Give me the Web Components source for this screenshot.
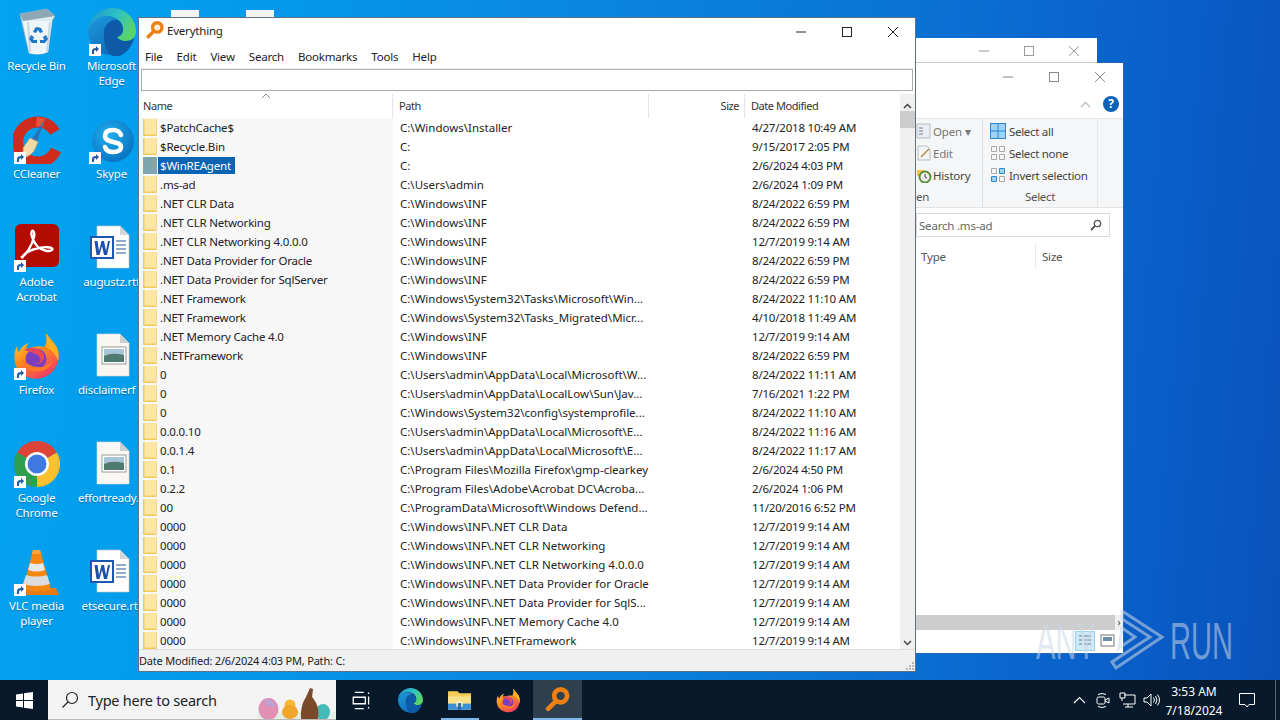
<!DOCTYPE html>
<html>
<head>
<meta charset="utf-8">
<title>Everything</title>
<style>
  html, body { margin: 0; height: 100%; overflow: hidden; }
  body { font-family: "Noto Sans", sans-serif; font-size: 11.5px; }
</style>
</head>
<body>
<win-desktop>
  <desk-icons slot="icons">
    <desk-icon icon="bin" label="Recycle Bin"></desk-icon>
    <desk-icon icon="edge" label="Microsoft Edge" link></desk-icon>
    <desk-icon icon="ccleaner" label="CCleaner" link></desk-icon>
    <desk-icon icon="skype" label="Skype" link></desk-icon>
    <desk-icon icon="acrobat" label="Adobe Acrobat" link></desk-icon>
    <desk-icon icon="word" label="augustz.rtf"></desk-icon>
    <desk-icon icon="firefox" label="Firefox" link></desk-icon>
    <desk-icon icon="image" label="disclaimerf" cut></desk-icon>
    <desk-icon icon="chrome" label="Google Chrome" link></desk-icon>
    <desk-icon icon="image" label="effortready." cut></desk-icon>
    <desk-icon icon="vlc" label="VLC media player" link></desk-icon>
    <desk-icon icon="word" label="etsecure.rtf"></desk-icon>
  </desk-icons>
  <explorer-window slot="windows" class="back"></explorer-window>
  <explorer-window slot="windows" class="front" ribbon></explorer-window>
  <everything-window slot="windows"></everything-window>
  <any-run slot="windows"></any-run>
  <task-bar slot="bar"></task-bar>
</win-desktop>

<script>
// icons are all on a 48x48 box
const ICONS = {
  bin: `<svg viewBox="0 0 48 48"><path d="M7 6 34 1l8 7-3 5-4 31q-9 4-19 1Z" fill="#dceaf2" stroke="#9fb6c4" stroke-width=".7"/><path d="M7 6 34 1l8 7-32 5Z" fill="#8fa6b4"/><path d="M10 13l29 0-4 31q-9 4-19 1Z" fill="#eef5f9"/><path d="M15 14l2 30M37 14l-3 30" stroke="#c6d7e1" stroke-width="2"/><path d="M24 19l4 1 2 4-3 1-2-3-2 3-3-1 2-4Z" fill="#1f78c8"/><path d="M18 27l3 2-1 3h4v3h-5l-3-4ZM33 27l2 4-3 4h-5v-3h4l-1-3Z" fill="#1f78c8"/></svg>`,
  edge: `<svg viewBox="0 0 48 48"><defs><linearGradient id="e1" x1="0" y1="0" x2="1" y2=".5"><stop offset="0" stop-color="#1c8fd0"/><stop offset=".55" stop-color="#2fc0c4"/><stop offset="1" stop-color="#58d46a"/></linearGradient><linearGradient id="e2" x1="0" y1="0" x2=".6" y2="1"><stop offset="0" stop-color="#1e9be0"/><stop offset="1" stop-color="#0f6cb8"/></linearGradient></defs><path d="M24 0C37 0 48 10 48 23c0 6-4 10-10 10-5 0-8-2-9-4 4-1 6-4 6-8C35 13 27 8 20 8 10 8 3 14 0 22 1 10 11 0 24 0Z" fill="url(#e1)"/><path d="M0 22C3 14 10 8 20 8c4 0 8 2 10 4-6-1-13 3-14 11-1 10 7 20 18 21-3 2-7 3-11 3C10 47 0 36 0 22Z" fill="url(#e2)"/><path d="M16 23c1-8 8-12 14-11 3 2 5 5 5 9 0 4-2 7-6 8 1 2 4 4 9 4 3 0 6-1 8-3-2 9-8 16-17 19C18 49 15 33 16 23Z" fill="#0e5aa7"/></svg>`,
  ccleaner: `<svg viewBox="0 0 48 48"><path d="M42 16 A20 20 0 1 0 43 34" fill="none" stroke="#cf2c1e" stroke-width="11"/><path d="M24 1l8 2-2 8-7-1Z" fill="#e8543a"/><path d="M32 3 24 25l-5-2Z" fill="#2f6fb5"/><path d="M17 22l8 4-4 9q-6 8-17 7 8-6 6-10Z" fill="#f1dba8" stroke="#c9a868" stroke-width=".7"/></svg>`,
  skype: `<svg viewBox="0 0 48 48"><defs><radialGradient id="s1" cx=".4" cy=".35" r=".8"><stop offset="0" stop-color="#1fb0f0"/><stop offset="1" stop-color="#0668b8"/></radialGradient></defs><circle cx="25" cy="25" r="21" fill="url(#s1)"/><path d="M33 19c-1-3-4-5-8-5-5 0-8 2-8 6 0 8 16 4 16 11 0 4-4 5-8 5-4 0-7-2-8-5" fill="none" stroke="#fff" stroke-width="4.6" stroke-linecap="round"/></svg>`,
  acrobat: `<svg viewBox="0 0 48 48"><rect x="2" y="0" width="44" height="43" rx="6" fill="#b30b00"/><path d="M9 33c5-3 10-12 12-20 1-5-1-7-2-6-2 2 1 11 6 16 4 4 12 5 14 3 2-2-4-4-13-2-7 1-14 5-16 8-1 2 0 2-1 1Z" fill="none" stroke="#fff" stroke-width="2.4"/></svg>`,
  word: `<svg viewBox="0 0 48 48"><path d="M9 2h23l9 9v33H9Z" fill="#fff" stroke="#c8c8c8" stroke-width=".6"/><path d="M32 2v9h9Z" fill="#d6d6d6"/><path d="M28 17h10M28 21h10M28 25h10M28 29h10" stroke="#2a5699" stroke-width="1.2"/><rect x="3" y="13" width="22" height="21" fill="#fff" stroke="#1b56b0" stroke-width="2"/><path d="M6.500 17h3l1.500 10 2.500-10h2.500l2 10 2-10h2l-3 14h-3l-2-9-2.500 9h-3Z" fill="#1d50a8"/></svg>`,
  image: `<svg viewBox="0 0 48 48"><path d="M9 2h23l9 9v33H9Z" fill="#f8f7f3" stroke="#dcdcdc" stroke-width=".6"/><path d="M32 2v9h9Z" fill="#cfcfcf"/><rect x="14" y="15" width="24" height="17" fill="#fff" stroke="#9a9a9a"/><rect x="16" y="17" width="20" height="7" fill="#a8c6d8"/><path d="M16 24q8-4 20-1v7H16Z" fill="#4e7a70"/></svg>`,
  firefox: `<svg viewBox="0 0 48 48"><defs><linearGradient id="f1" x1=".2" y1="0" x2=".8" y2="1"><stop offset="0" stop-color="#ffcf30"/><stop offset=".45" stop-color="#ff8a1f"/><stop offset="1" stop-color="#f0326a"/></linearGradient></defs><path d="M33 1c3 5 6 7 10 13 5 8 3 21-6 28-9 7-22 6-30-2C0 33 0 22 4 14c0 3 1 5 2 6 2-5 6-8 10-9-3 3-3 5-2 6 5-2 12-4 17-2 3-4 3-9 2-14Z" fill="url(#f1)"/><path d="M33 1c3 5 6 7 10 13 3 5 3 11 2 15-2-6-6-11-12-14 1-4 1-9 0-14Z" fill="#ffb01f"/><circle cx="23" cy="27" r="10.500" fill="#7a3fc0"/><path d="M11 18c6-4 17-3 20 5 1 6-4 10-9 9 4 0 6-3 5-6-1-4-7-5-16-8Z" fill="#e8475f"/><path d="M9 26c1 10 10 15 19 13 7-1 11-7 12-12-3 6-10 9-16 8-7-1-12-4-15-9Z" fill="#ff7a28"/></svg>`,
  chrome: `<svg viewBox="0 0 48 48"><path d="M24 24 4.100 12.500A23 23 0 0 1 43.900 12.500Z" fill="#db4437"/><path d="M24 24 43.900 12.500A23 23 0 0 1 24 47Z" fill="#fbc02d"/><path d="M24 24 24 47A23 23 0 0 1 4.100 12.500Z" fill="#2f9e4f"/><circle cx="24" cy="24" r="12" fill="#fff"/><circle cx="24" cy="24" r="9.500" fill="#3f78e0"/></svg>`,
  vlc: `<svg viewBox="0 0 48 48"><path d="M5 40h38l3 7H2Z" fill="#e77b12"/><path d="M20 2h7l11 39q-14 5-28 0Z" fill="#f5860f"/><path d="M17 15q7 2 13 0l2 7q-8 3-17 0Z" fill="#e8e8e8"/><path d="M13 27q10 3 21 0l3 9q-13 4-27 0Z" fill="#dcdcdc"/><path d="M20 2h7l1 4h-9Z" fill="#ffa53a"/></svg>`,
  search: `<svg viewBox="0 0 48 48"><circle cx="30" cy="17" r="12.500" fill="#fff3dc" stroke="#ee7f12" stroke-width="9"/><path d="M20 28 6 42" stroke="#ee7f12" stroke-width="9" stroke-linecap="round"/></svg>`,
  folder: `<svg viewBox="0 0 14 17"><path d="M0 0h14v17H0Z" fill="#fbe7a3"/><path d="M0 0h1.500v17H0ZM0 15.500h14V17H0Z" fill="#f0c95c"/><path d="M13 0h1v17h-1Z" fill="#f4d888"/></svg>`,
  explorer: `<svg viewBox="0 0 24 24"><path d="M1 3h9l2 2h11v16H1Z" fill="#f6cf5a"/><path d="M1 8h22v13H1Z" fill="#fbe08a"/><path d="M1 15h22v6H1Z" fill="#3d8fd6"/><rect x="9" y="13" width="6" height="5" fill="#fff3c8"/><rect x="10.500" y="14.500" width="3" height="6.500" fill="#2a6fb0"/></svg>`
};

const SHORTCUT = `<svg viewBox="0 0 12 12"><rect width="12" height="12" fill="#fff"/><path d="M3 10V7q0-3 4-3V2l3 3-3 3V6q-2 0-2 2v2Z" fill="#1c5ea8"/></svg>`;

class WinDesktop extends HTMLElement {
  constructor() {
    super();
    this.attachShadow({ mode: 'open' }).innerHTML = `
      <style>
        :host { display: flex; flex-direction: column; width: 1280px; height: 720px; overflow: hidden;
          font-family: "Noto Sans", sans-serif; font-size: 11.500px; letter-spacing: -.2px; color: #222; }
        .wall { position: relative; flex: 1; overflow: hidden;
          background: linear-gradient(95deg, #03a3ef 0%, #039ded 14%, #0a86de 45%, #0a6fd2 72%, #0a5cc6 90%, #0a52ba 100%); }
        .paper { position: absolute; top: 10px; width: 28px; height: 10px; background: #f4f4f4; }
      </style>
      <div class="wall">
        <slot name="icons"></slot>
        <div class="paper" style="left:171px"></div>
        <div class="paper" style="left:246px"></div>
        <slot name="windows"></slot>
      </div>
      <slot name="bar"></slot>`;
  }
}

class DeskIcons extends HTMLElement {
  constructor() {
    super();
    this.attachShadow({ mode: 'open' }).innerHTML = `
      <style>
        :host { position: absolute; left: -1px; top: 8px; display: grid;
          grid-template-columns: 75px 75px; grid-auto-rows: 108px; }
      </style>
      <slot></slot>`;
  }
}

class DeskIcon extends HTMLElement {
  constructor() {
    super();
    this.attachShadow({ mode: 'open' });
  }
  connectedCallback() {
    const link = this.hasAttribute('link') ? `<span class="arrow">${SHORTCUT}</span>` : '';
    this.shadowRoot.innerHTML = `
      <style>
        :host { display: flex; flex-direction: column; align-items: center; }
        .pic { position: relative; width: 48px; height: 48px; margin-bottom: 2px; }
        .pic svg { display: block; width: 48px; height: 48px; }
        .arrow { position: absolute; left: 1px; bottom: 0; width: 12px; height: 12px; }
        .arrow svg { width: 12px; height: 12px; }
        .label { width: 75px; box-sizing: border-box; text-align: center; color: #fff; line-height: 15px;
          text-shadow: 0 1px 1px rgba(0,40,90,.45); }
        :host([cut]) .label { text-align: left; padding-left: 4px; white-space: nowrap; }
      </style>
      <div class="pic">${ICONS[this.getAttribute('icon')]}${link}</div>
      <div class="label">${this.getAttribute('label')}</div>`;
  }
}

const WIN_BUTTONS = `
  <svg viewBox="0 0 10 10" width="10" height="10"><path d="M0 5h10" stroke="currentColor"/></svg>
  <svg viewBox="0 0 10 10" width="10" height="10"><rect x=".5" y=".5" width="9" height="9" fill="none" stroke="currentColor"/></svg>
  <svg viewBox="0 0 10 10" width="10" height="10"><path d="M0 0l10 10M10 0 0 10" stroke="currentColor"/></svg>`;

class ExplorerWindow extends HTMLElement {
  constructor() {
    super();
    this.attachShadow({ mode: 'open' });
  }
  connectedCallback() {
    const ribbon = this.hasAttribute('ribbon');
    const back = `
      <style>
        :host { position: absolute; left: 900px; top: 38px; width: 197px; height: 60px; background: #fff;
          color: #9a9a9a; }
        .btns { display: flex; justify-content: flex-end; align-items: center; gap: 35px; height: 25px; padding-right: 18px; }
      </style>
      <div class="btns">${WIN_BUTTONS}</div>`;
    const front = `
      <style>
        :host { position: absolute; left: 900px; top: 63px; width: 223px; height: 590px; background: #fff;
          color: #333; display: flex; flex-direction: column; box-shadow: 0 0 0 1px rgba(90,110,130,.35); }
        .btns { display: flex; justify-content: flex-end; align-items: center; gap: 36px; height: 27px; padding-right: 18px; color: #8a8a8a; }
        .tabs { display: flex; justify-content: flex-end; align-items: center; gap: 12px; height: 28px; padding-right: 4px; color: #bbb; }
        .help { width: 16px; height: 16px; border-radius: 50%; background: #0b63b5; color: #fff; font-weight: 700;
          font-size: 12px; line-height: 16px; text-align: center; }
        .ribbon { background: #f5f6f7; border-top: 1px solid #e6e6e6; border-bottom: 1px solid #e4e4e4; height: 90px; box-sizing: border-box;
          display: grid; grid-template-columns: 66px 1fr; padding-left: 16px; }
        .grp { display: flex; flex-direction: column; align-items: stretch; }
        .grp.sel { border-left: 1px solid #dcdfe2; border-right: 1px solid #e4e6e8; margin-right: 25px; padding-left: 7px; letter-spacing: -.3px; }
        .item { display: flex; align-items: center; gap: 1px; height: 22px; white-space: nowrap; }
        .sel .item { gap: 3px; }
        .items { padding-top: 1px; height: 70px; }
        .item span { color: #444; }
        .dim span { color: #777; }
        .cap { text-align: center; color: #555; line-height: 14px; }
        .sel .cap { margin-left: -7px; }
        .item svg { display: block; flex: none; }
        .find { margin: 5px 13px 0 16px; height: 22px; border: 1px solid #d9d9d9; display: flex; align-items: center;
          justify-content: space-between; padding: 0 7px 0 2px; color: #666; }
        .heads { display: flex; height: 24px; margin: 7px 0 0 21px; color: #555; align-items: center; }
        .heads span { height: 100%; display: flex; align-items: center; border-right: 1px solid #e8e8e8; padding-left: 0; }
        .body { flex: 1; }
        .hbar { height: 15px; margin-left: 16px; background: #cdcdcd; display: flex; justify-content: flex-end; }
        .hbar i { background: #f0f0f0; width: 8px; font-style: normal; text-align: center; line-height: 14px; color: #444; font-size: 10px; margin-left: auto; }
        .foot { height: 23px; box-sizing: border-box; display: flex; justify-content: flex-end; align-items: flex-start; gap: 5px; padding: 1px 8px 0 0; }
        .foot b { display: block; width: 20px; height: 20px; box-sizing: border-box; }
        .foot b:last-child { width: 15px; }
        .foot .on { background: #cde8f8; border: 1px solid #99d1ef; }
      </style>
      <div class="btns">${WIN_BUTTONS}</div>
      <div class="tabs">
        <svg width="11" height="7" viewBox="0 0 11 7"><path d="M1 6l4.500-4.500L10 6" fill="none" stroke="currentColor" stroke-width="1.300"/></svg>
        <div class="help">?</div>
      </div>
      <div class="ribbon">
        <div class="grp">
          <div class="items">
            <div class="item dim"><svg width="16" height="16" viewBox="0 0 16 16"><path d="M1 1h13v14H1Z" fill="#eaeef2" stroke="#b5bcc4"/><path d="M3 5h4M3 8h4M3 11h4" stroke="#9aa4ae" stroke-width="1.500"/></svg><span>Open ▾</span></div>
            <div class="item dim"><svg width="16" height="16" viewBox="0 0 16 16"><path d="M2 1h9l3 3v11H2Z" fill="#f4f6f8" stroke="#b5bcc4"/><path d="M5 12l8-8" stroke="#b58a3c" stroke-width="1.500"/></svg><span>Edit</span></div>
            <div class="item"><svg width="16" height="16" viewBox="0 0 16 16"><path d="M1 3h7v6H1Z" fill="#f3c34c"/><circle cx="9" cy="10" r="5.500" fill="#eef1ee" stroke="#5b8f3a" stroke-width="2"/><path d="M9 7v3l2 1" stroke="#444" fill="none"/></svg><span>History</span></div>
          </div>
          <div class="cap" style="text-align:left">en</div>
        </div>
        <div class="grp sel">
          <div class="items">
            <div class="item"><svg width="16" height="16" viewBox="0 0 16 16"><rect x=".5" y=".5" width="15" height="15" fill="#9fd3f5" stroke="#2f86c9"/><path d="M8 0v16M0 8h16" stroke="#2f86c9"/></svg><span>Select all</span></div>
            <div class="item"><svg width="16" height="16" viewBox="0 0 16 16"><path d="M1.500 1.500h5v5h-5ZM9.500 1.500h5v5h-5ZM1.500 9.500h5v5h-5ZM9.500 9.500h5v5h-5Z" fill="none" stroke="#a9a9a9"/></svg><span>Select none</span></div>
            <div class="item"><svg width="16" height="16" viewBox="0 0 16 16"><path d="M1.500 1.500h5v5h-5ZM9.500 9.500h5v5h-5Z" fill="none" stroke="#a9a9a9"/><path d="M9.500 1.500h5v5h-5ZM1.500 9.500h5v5h-5Z" fill="#9fd3f5" stroke="#2f86c9"/></svg><span>Invert selection</span></div>
          </div>
          <div class="cap">Select</div>
        </div>
      </div>
      <div class="find"><span>Search .ms-ad</span>
        <svg width="12" height="12" viewBox="0 0 12 12"><circle cx="7.500" cy="4.500" r="3.200" fill="none" stroke="#555" stroke-width="1.300"/><path d="M5 7 1 11" stroke="#555" stroke-width="1.800"/></svg></div>
      <div class="heads"><span style="width:114px">Type</span><span style="width:80px;padding-left:6px;border-right:0">Size</span></div>
      <div class="body"></div>
      <div class="hbar"><i>›</i></div>
      <div class="foot">
        <b class="on"><svg width="18" height="18" viewBox="0 0 18 18"><path d="M3 4h3M3 8h3M3 12h3M8 4h7M8 8h7M8 12h7" stroke="#777" stroke-width="1.200"/></svg></b>
        <b><svg width="15" height="20" viewBox="0 0 15 20"><rect x="1" y="4" width="13" height="11" fill="#fff" stroke="#777"/><rect x="3" y="6" width="9" height="4" fill="#6c8ea8"/></svg></b>
      </div>`;
    this.shadowRoot.innerHTML = ribbon ? front : back;
  }
}

class EverythingWindow extends HTMLElement {
  constructor() {
    super();
    const rows = [
      ['$PatchCache$', 'C:\\Windows\\Installer', '4/27/2018 10:49 AM'],
      ['$Recycle.Bin', 'C:', '9/15/2017 2:05 PM'],
      ['$WinREAgent', 'C:', '2/6/2024 4:03 PM', 1],
      ['.ms-ad', 'C:\\Users\\admin', '2/6/2024 1:09 PM'],
      ['.NET CLR Data', 'C:\\Windows\\INF', '8/24/2022 6:59 PM'],
      ['.NET CLR Networking', 'C:\\Windows\\INF', '8/24/2022 6:59 PM'],
      ['.NET CLR Networking 4.0.0.0', 'C:\\Windows\\INF', '12/7/2019 9:14 AM'],
      ['.NET Data Provider for Oracle', 'C:\\Windows\\INF', '8/24/2022 6:59 PM'],
      ['.NET Data Provider for SqlServer', 'C:\\Windows\\INF', '8/24/2022 6:59 PM'],
      ['.NET Framework', 'C:\\Windows\\System32\\Tasks\\Microsoft\\Win...', '8/24/2022 11:10 AM'],
      ['.NET Framework', 'C:\\Windows\\System32\\Tasks_Migrated\\Micr...', '4/10/2018 11:49 AM'],
      ['.NET Memory Cache 4.0', 'C:\\Windows\\INF', '12/7/2019 9:14 AM'],
      ['.NETFramework', 'C:\\Windows\\INF', '8/24/2022 6:59 PM'],
      ['0', 'C:\\Users\\admin\\AppData\\Local\\Microsoft\\W...', '8/24/2022 11:11 AM'],
      ['0', 'C:\\Users\\admin\\AppData\\LocalLow\\Sun\\Jav...', '7/16/2021 1:22 PM'],
      ['0', 'C:\\Windows\\System32\\config\\systemprofile...', '8/24/2022 11:10 AM'],
      ['0.0.0.10', 'C:\\Users\\admin\\AppData\\Local\\Microsoft\\E...', '8/24/2022 11:16 AM'],
      ['0.0.1.4', 'C:\\Users\\admin\\AppData\\Local\\Microsoft\\E...', '8/24/2022 11:17 AM'],
      ['0.1', 'C:\\Program Files\\Mozilla Firefox\\gmp-clearkey', '2/6/2024 4:50 PM'],
      ['0.2.2', 'C:\\Program Files\\Adobe\\Acrobat DC\\Acroba...', '2/6/2024 1:06 PM'],
      ['00', 'C:\\ProgramData\\Microsoft\\Windows Defend...', '11/20/2016 6:52 PM'],
      ['0000', 'C:\\Windows\\INF\\.NET CLR Data', '12/7/2019 9:14 AM'],
      ['0000', 'C:\\Windows\\INF\\.NET CLR Networking', '12/7/2019 9:14 AM'],
      ['0000', 'C:\\Windows\\INF\\.NET CLR Networking 4.0.0.0', '12/7/2019 9:14 AM'],
      ['0000', 'C:\\Windows\\INF\\.NET Data Provider for Oracle', '12/7/2019 9:14 AM'],
      ['0000', 'C:\\Windows\\INF\\.NET Data Provider for SqlS...', '12/7/2019 9:14 AM'],
      ['0000', 'C:\\Windows\\INF\\.NET Memory Cache 4.0', '12/7/2019 9:14 AM'],
      ['0000', 'C:\\Windows\\INF\\.NETFramework', '12/7/2019 9:14 AM']
    ];
    this.attachShadow({ mode: 'open' }).innerHTML = `
      <style>
        :host { position: absolute; left: 138px; top: 17px; width: 778px; height: 655px; box-sizing: border-box;
          background: #fff; border: 1px solid #5f7183; display: flex; flex-direction: column; color: #222; }
        .title { flex: none; height: 28px; box-sizing: border-box; padding: 0 0 4px 7px; display: flex; align-items: center; gap: 3px; }
        .title svg.logo { width: 18px; height: 18px; }
        .title span { flex: 1; }
        .btns { display: flex; align-items: center; gap: 36px; padding: 4px 17px 0 0; color: #222; }
        .menu { flex: none; height: 23px; box-sizing: border-box; display: flex; align-items: center; gap: 14px; padding: 0 0 2px 6px; border-bottom: 1px solid #f0f0f0; }
        .input { flex: none; height: 20px; margin: 0 2px; border: 1px solid #adadad; background: #fff; }
        .head { flex: none; position: relative; height: 24px; box-sizing: border-box; margin-top: 3px; display: grid; grid-template-columns: 254px 256px 96px 1fr 15px; font-size: 11px; letter-spacing: -.45px; }
        .head > div { display: flex; align-items: center; border-right: 1px solid #e5e5e5; padding: 0 0 2px 4px; color: #333; }
        .head .size { justify-content: flex-end; padding: 0 5px 2px 0; }
        .head .date { padding-left: 6px; border: 0; }
        .head .up { background: #f0f0f0; border: 0; padding: 0; justify-content: center; }
        .caret { position: absolute; left: 122px; top: -1px; }
        .main { flex: 1; min-height: 0; display: grid; grid-template-columns: 1fr 15px; }
        .list { overflow: hidden; }
        .bar { background: #f0f0f0; position: relative; display: flex; justify-content: center; }
        .thumb { position: absolute; left: 0; right: 0; top: -7px; height: 17px; background: #cdcdcd; }
        .down { position: absolute; bottom: 3px; left: 3px; }
        .status { flex: none; height: 21px; background: #f0f0f0; border-top: 1px solid #dedede; display: flex; align-items: center; justify-content: space-between; font-size: 11px; }
        .status svg { align-self: flex-end; }
      </style>
      <div class="title">
        <svg class="logo" viewBox="0 0 48 48">${ICONS.search.replace(/<\/?svg[^>]*>/g, '')}</svg>
        <span>Everything</span>
        <div class="btns">${WIN_BUTTONS}</div>
      </div>
      <div class="menu"><span>File</span><span>Edit</span><span>View</span><span>Search</span><span>Bookmarks</span><span>Tools</span><span>Help</span></div>
      <div class="input"></div>
      <div class="head">
        <div>Name</div><div style="padding-left:6px">Path</div><div class="size">Size</div><div class="date">Date Modified</div>
        <div class="up"><svg width="9" height="6" viewBox="0 0 9 6"><path d="M1 5l3.500-3.500L8 5" fill="none" stroke="#444" stroke-width="1.500"/></svg></div>
        <svg class="caret" width="10" height="6" viewBox="0 0 10 6"><path d="M1 5l4-4 4 4" fill="none" stroke="#888"/></svg>
      </div>
      <div class="main">
        <div class="list">${rows.map(r => `<file-row name="${r[0]}" path="${r[1].replace(/\\/g, '&#92;')}" date="${r[2]}"${r[3] ? ' selected' : ''}></file-row>`).join('')}</div>
        <div class="bar"><div class="thumb"></div>
          <svg class="down" width="9" height="6" viewBox="0 0 9 6"><path d="M1 1l3.500 3.500L8 1" fill="none" stroke="#444" stroke-width="1.500"/></svg></div>
      </div>
      <div class="status"><span>Date Modified: 2/6/2024 4:03 PM, Path: C:</span>
        <svg width="12" height="12" viewBox="0 0 12 12"><path d="M9 3h2v2H9ZM6 6h2v2H6ZM9 6h2v2H9ZM3 9h2v2H3ZM6 9h2v2H6ZM9 9h2v2H9Z" fill="#b8b8b8"/></svg></div>`;
  }
}

class FileRow extends HTMLElement {
  constructor() {
    super();
    this.attachShadow({ mode: 'open' });
  }
  connectedCallback() {
    this.shadowRoot.innerHTML = `
      <style>
        :host { display: grid; grid-template-columns: 254px 256px 96px 1fr; height: 19px; line-height: 19px; white-space: nowrap; color: #222; }
        .name { background: #f7f7f7; display: flex; align-items: center; padding-left: 4px; }
        .name svg { width: 14px; height: 17px; margin-right: 1px; flex: none; }
        :host([selected]) .name svg path { fill: #7fa6b0; }
        :host([selected]) .text { background: #0a64b4; color: #fff; }
        .text { padding: 0 4px 0 2px; line-height: 17px; }
        .path { padding-left: 7px; letter-spacing: 0; }
        .date { padding-left: 7px; }
      </style>
      <div class="name">${ICONS.folder}<span class="text">${this.getAttribute('name')}</span></div>
      <div class="path">${this.getAttribute('path')}</div>
      <div></div>
      <div class="date">${this.getAttribute('date')}</div>`;
  }
}

class AnyRun extends HTMLElement {
  constructor() {
    super();
    this.attachShadow({ mode: 'open' }).innerHTML = `
      <style>
        :host { position: absolute; left: 1036px; top: 608px; width: 200px; height: 66px; display: flex; align-items: center;
          color: rgba(205,216,230,.55); font-family: "Liberation Sans", sans-serif; font-size: 52px; letter-spacing: 0; line-height: 66px; pointer-events: none; }
        span { display: block; transform: scaleX(.56); transform-origin: 0 50%; width: 60px; }
        .run { margin-left: 74px; }
        svg { position: absolute; left: 72px; top: -2px; }
      </style>
      <span>ANY</span>
      <svg width="62" height="66" viewBox="0 0 62 66"><path d="M14 5 54 31 8 62l-4-6 38-25L14 13ZM14 22l13 9-16 11Z" fill="none" stroke="rgba(205,216,230,.55)" stroke-width="3"/></svg>
      <span class="run">RUN</span>`;
  }
}

class TaskBar extends HTMLElement {
  constructor() {
    super();
    this.attachShadow({ mode: 'open' }).innerHTML = `
      <style>
        :host { flex: none; display: flex; height: 40px; background: #07192a; color: #fff; align-items: stretch;
          font-size: 12px; letter-spacing: 0; }
        .start { width: 48px; display: flex; align-items: center; justify-content: center; }
        .box { width: 288px; background: #f3f3f3; color: #222; display: flex; align-items: center; padding-left: 13px; box-sizing: border-box; gap: 9px; position: relative; font-size: 14.500px; letter-spacing: -.25px; border-bottom: 1px solid #b8b8b8; }
        .easter { position: absolute; right: 0; bottom: 0; }
        .slot { width: 49px; display: flex; align-items: center; justify-content: center; box-sizing: border-box; }
        .slot svg { width: 25px; height: 25px; }
        .task { width: 48px; margin-right: 2px; }
        .task svg { width: 21px; height: 21px; }
        .open { background: linear-gradient(#7fb8e8, #7fb8e8) center bottom / 38px 2px no-repeat; }
        .on { background: #2e3f4e; border-bottom: 2px solid #7fb8e8; }
        .tray { margin-left: auto; display: flex; align-items: center; }
        .t { width: 24px; display: flex; justify-content: center; }
        .clock { width: 62px; text-align: center; line-height: 19px; padding-top: 1px; }
        .note { width: 36px; display: flex; justify-content: center; margin: 0 10px 0 4px; }
        .edge { width: 1px; background: #55636f; margin-right: 4px; align-self: stretch; }
      </style>
      <div class="start"><svg width="17" height="17" viewBox="0 0 17 17"><path d="M0 2.500 7 1.500V8H0ZM8 1.300 17 0V8H8ZM0 9h7v6.500L0 14.500ZM8 9h9v8L8 15.700Z" fill="#fff"/></svg></div>
      <div class="box">
        <svg width="18" height="18" viewBox="0 0 18 18"><circle cx="11" cy="7" r="5.500" fill="none" stroke="#222" stroke-width="1.200"/><path d="M7 11 1.500 16.500" stroke="#222" stroke-width="1.300"/></svg>
        <span>Type here to search</span>
        <svg class="easter" width="80" height="40" viewBox="0 0 80 40"><rect y="33" x="2" width="78" height="7" fill="#e3efe2"/><ellipse cx="12.500" cy="30" rx="10" ry="11" fill="#e28fb5"/><path d="M8 21q8-3 12 7l-8-1Z" fill="#b6a3d8"/><circle cx="34" cy="26" r="5.500" fill="#f7b733"/><ellipse cx="34" cy="33" rx="8" ry="7" fill="#f2a52c"/><ellipse cx="67" cy="33" rx="7" ry="8" fill="#45b8b8"/><path d="M50 18l4-9 3 1-1 8 1 1q7 9 5 21H45q-1-13 5-22Z" fill="#7a4a2a"/></svg>
      </div>
      <div class="slot task"><svg viewBox="0 0 26 26"><path d="M6 3h11M6 23h11M4 9h15v8H4ZM23 3v2M23 8v10M23 21v2" fill="none" stroke="#fff" stroke-width="1.600"/></svg></div>
      <div class="slot">${ICONS.edge.replace(/e1|e2/g, m => m + 't')}</div>
      <div class="slot open">${ICONS.explorer}</div>
      <div class="slot">${ICONS.firefox.replace(/f1/g, 'f1t')}</div>
      <div class="slot on">${ICONS.search.replace('#fff3dc', 'none')}</div>
      <div class="tray">
        <div class="t"><svg width="13" height="8" viewBox="0 0 13 8"><path d="M1 7l5.500-5.500L12 7" fill="none" stroke="#fff" stroke-width="1.200"/></svg></div>
        <div class="t"><svg width="16" height="17" viewBox="0 0 16 17"><rect x="2" y="5" width="8" height="7" rx="1.500" fill="none" stroke="#fff"/><path d="M10 8l4-2v5l-4-2M3 2.500q4-2 8 0M3 14.500q4 2 8 0" fill="none" stroke="#fff"/></svg></div>
        <div class="t"><svg width="17" height="16" viewBox="0 0 17 16"><path d="M5 3h11v9H4M6 15h8M9 12v3M1 1h5v5H1ZM3 6v3" fill="none" stroke="#fff"/></svg></div>
        <div class="t"><svg width="17" height="14" viewBox="0 0 17 14"><path d="M1 5h3l4-4v12l-4-4H1ZM10.500 4.500q2 2.500 0 5M12.500 3q3 4 0 8M14.500 1.500q4 5.500 0 11" fill="none" stroke="#fff"/></svg></div>
        <div class="clock">3:53 AM<br>7/18/2024</div>
        <div class="note"><svg width="16" height="15" viewBox="0 0 16 15"><path d="M.5.500h15v11H10l-2 2.500-2-2.500H.5Z" fill="none" stroke="#fff"/></svg></div>
        <div class="edge"></div>
      </div>`;
  }
}

customElements.define('win-desktop', WinDesktop);
customElements.define('desk-icons', DeskIcons);
customElements.define('desk-icon', DeskIcon);
customElements.define('explorer-window', ExplorerWindow);
customElements.define('everything-window', EverythingWindow);
customElements.define('file-row', FileRow);
customElements.define('any-run', AnyRun);
customElements.define('task-bar', TaskBar);
</script>
</body>
</html>
